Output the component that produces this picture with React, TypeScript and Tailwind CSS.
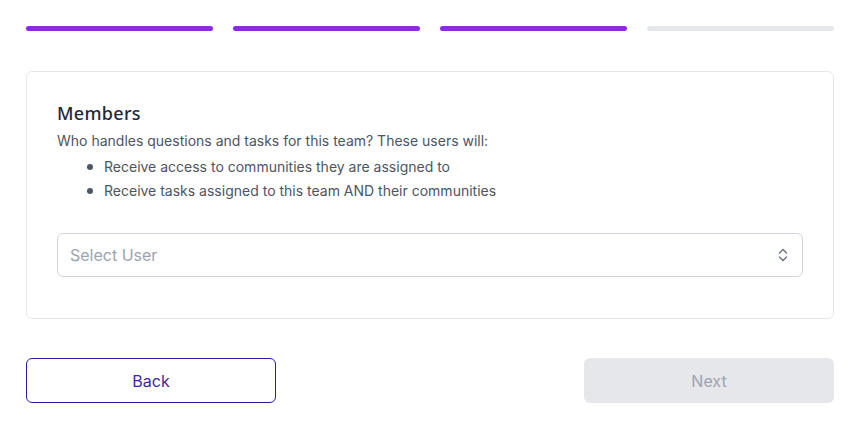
import React from 'react';

const steps = [true, true, true, false];

const bullets = [
  'Receive access to communities they are assigned to',
  'Receive tasks assigned to this team AND their communities',
];

const App: React.FC = () => {
  return (
    <div className="min-h-screen bg-white pl-[26px] pr-[27px] pt-[26px] font-['Inter',sans-serif]">
      {/* Stepper */}
      <div className="grid grid-cols-4 gap-5">
        {steps.map((done, i) => (
          <div key={i} className={done ? 'h-[5px] rounded-full bg-[#8a2be2]' : 'h-[5px] rounded-full bg-[#e5e7eb]'}></div>
        ))}
      </div>

      {/* Card */}
      <div className="mt-[40px] rounded-md border border-[#e5e7eb] px-[30px] pt-[29px] pb-[41px]">
        <h2 className="text-[18px] font-medium leading-6 tracking-[0.3px] text-[#1f2937] font-['Noto_Sans',sans-serif]">Members</h2>
        <p className="mt-[4px] text-sm leading-6 text-[#4b5563]">Who handles questions and tasks for this team? These users will:</p>
        <ul className="mt-[2px] pl-[30px]">
          {bullets.map((b, i) => (
            <li key={i} className="flex items-center gap-[11px] text-sm leading-6 text-[#4b5563]">
              <span className="h-[6px] w-[6px] rounded-full bg-[#4b5563]"></span>
              {b}
            </li>
          ))}
        </ul>
        <div className="mt-[30px] flex h-[44px] items-center justify-between rounded-md border border-[#d1d5db] pl-[12px] pr-[12px]">
          <span className="text-base text-[#9ca3af]">Select User</span>
          <svg width="14" height="18" viewBox="0 0 14 18" fill="none" stroke="#6b7280" strokeWidth="1.4" strokeLinecap="round" strokeLinejoin="round">
            <path d="M3.5 7 L7 3.5 L10.5 7" />
            <path d="M3.5 11 L7 14.5 L10.5 11" />
          </svg>
        </div>
      </div>

      {/* Actions */}
      <div className="mt-[39px] flex justify-between">
        <button className="h-[45px] w-[250px] rounded-md border border-[#2e1a9e] bg-white text-base text-[#3a2aa0]">Back</button>
        <button className="h-[45px] w-[250px] rounded-md bg-[#e5e7eb] text-base text-[#9ca3af]" disabled>Next</button>
      </div>
    </div>
  );
};

export default App;
